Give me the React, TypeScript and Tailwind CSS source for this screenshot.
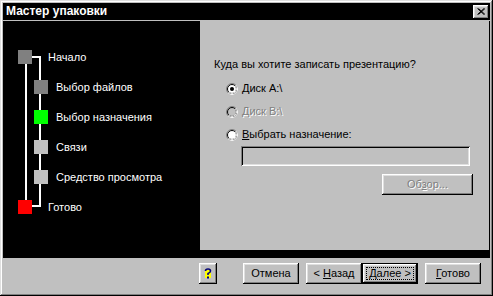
import React from 'react';

const bevel =
  'shadow-[inset_-1px_-1px_#000,inset_1px_1px_#fff,inset_-2px_-2px_#808080,inset_2px_2px_#dfdfdf]';

function Radio({ checked = false, disabled = false }: { checked?: boolean; disabled?: boolean }) {
  return (
    <svg width="12" height="12" viewBox="0 0 12 12" className="shrink-0">
      <circle cx="6" cy="6" r="5" fill={disabled ? '#c0c0c0' : '#fff'} />
      <circle cx="6" cy="6" r="5.5" fill="none" stroke="#808080" />
      <path d="M9.89 2.11 A5.5 5.5 0 0 1 2.11 9.89" fill="none" stroke="#fff" />
      <circle cx="6" cy="6" r="4.5" fill="none" stroke="#000" />
      <path d="M9.18 2.82 A4.5 4.5 0 0 1 2.82 9.18" fill="none" stroke="#dfdfdf" />
      {checked && <circle cx="6" cy="6" r="2" fill="#000" />}
    </svg>
  );
}

function Button({
  children,
  width,
  isDefault = false,
}: {
  children: React.ReactNode;
  width: string;
  isDefault?: boolean;
}) {
  if (isDefault) {
    return (
      <div className={`${width} h-[21px] border border-black bg-[#c0c0c0]`}>
        <div className="h-full w-full shadow-[inset_-1px_-1px_#000,inset_1px_1px_#fff,inset_-2px_-2px_#808080,inset_2px_2px_#dfdfdf] p-[3px]">
          <div className="h-full w-full border border-dotted border-black flex items-center justify-center">
            {children}
          </div>
        </div>
      </div>
    );
  }
  return (
    <div className={`${width} h-[21px] bg-[#c0c0c0] ${bevel} flex items-center justify-center`}>
      {children}
    </div>
  );
}

const steps = [
  { label: 'Начало', color: 'bg-[#808080]', sub: false },
  { label: 'Выбор файлов', color: 'bg-[#808080]', sub: true },
  { label: 'Выбор назначения', color: 'bg-[#00ff00]', sub: true },
  { label: 'Связи', color: 'bg-[#c0c0c0]', sub: true },
  { label: 'Средство просмотра', color: 'bg-[#c0c0c0]', sub: true },
  { label: 'Готово', color: 'bg-[#ff0000]', sub: false },
];

export default function App() {
  return (
    <div className="w-[493px] h-[296px] bg-[#c0c0c0] p-[3px] shadow-[inset_-1px_-1px_#000,inset_1px_1px_#dfdfdf,inset_-2px_-2px_#808080,inset_2px_2px_#fff] font-['Liberation_Sans',Arial,sans-serif] text-[11px] leading-[13px] text-black flex flex-col">
      {/* title bar */}
      <div className="h-[17px] bg-black flex items-center pl-[3px] pr-[1px]">
        <span className="text-white font-bold text-[12px] flex-1">Мастер упаковки</span>
        <div className={`w-[16px] h-[14px] bg-[#c0c0c0] ${bevel} flex items-center justify-center`}>
          <svg width="8" height="7" viewBox="0 0 8 7">
            <path d="M0.5 0.5 L7 6.5 M1.5 0.5 L8 6.5 M7 0.5 L0.5 6.5 M8 0.5 L1.5 6.5" stroke="#000" strokeWidth="1" />
          </svg>
        </div>
      </div>

      {/* body */}
      <div className="mt-[1px] h-[237px] bg-black flex">
        <div className="w-[197px] relative pt-[21px]">
          <svg className="absolute left-0 top-0" width="60" height="200">
            <rect x="22" y="43" width="2" height="137" fill="#fff" />
            <rect x="36" y="35" width="2" height="151" fill="#fff" />
            <rect x="29" y="35" width="9" height="2" fill="#fff" />
            <rect x="29" y="184" width="9" height="2" fill="#fff" />
          </svg>
          {steps.map((s) => (
            <div key={s.label} className={`relative h-[30px] flex items-center ${s.sub ? 'pl-[31px]' : 'pl-[15px]'}`}>
              <div className={`w-[14px] h-[14px] ${s.color}`} />
              <span className={`text-white ${s.sub ? 'ml-[8px]' : 'ml-[16px]'}`}>{s.label}</span>
            </div>
          ))}
        </div>

        <div className="w-[289px] h-[229px] bg-[#c0c0c0] pl-[14px] pt-[37px]">
          <div>Куда вы хотите записать презентацию?</div>
          <div className="ml-[12px] mt-[10px] flex flex-col gap-[8px]">
            <div className="flex items-center gap-[4px] h-[15px]">
              <Radio checked />
              <span>Диск A:\</span>
            </div>
            <div className="flex items-center gap-[4px] h-[15px]">
              <Radio disabled />
              <span className="text-[#808080] [text-shadow:1px_1px_0_#fff]">
                <u>Д</u>иск B:\
              </span>
            </div>
            <div className="flex items-center gap-[4px] h-[15px]">
              <Radio />
              <span>
                <u>В</u>ыбрать назначение:
              </span>
            </div>
          </div>
          <div className="ml-[27px] mt-[4px] w-[229px] h-[20px] bg-[#c0c0c0] shadow-[inset_1px_1px_#808080,inset_-1px_-1px_#fff,inset_2px_2px_#000,inset_-2px_-2px_#dfdfdf]" />
          <div className="ml-[168px] mt-[8px]">
            <Button width="w-[91px]">
              <span className="text-[#808080] [text-shadow:1px_1px_0_#fff]">
                Об<u>з</u>ор...
              </span>
            </Button>
          </div>
        </div>
      </div>

      {/* footer */}
      <div className="flex items-start pt-[5px] pl-[196px]">
        <div className={`w-[18px] h-[21px] bg-[#c0c0c0] ${bevel} flex items-center justify-center`}>
          <svg width="8" height="11" viewBox="0 0 8 11">
            <rect x="1" y="1" width="6" height="9" fill="#ffff00" />
            <path d="M1.5 3 Q1.5 1 4 1 Q6.5 1 6.5 3 Q6.5 4.5 4 5.5 L4 7" fill="none" stroke="#000080" strokeWidth="1.6" />
            <rect x="3" y="8.5" width="2" height="2" fill="#000080" />
          </svg>
        </div>
        <div className="ml-[26px]">
          <Button width="w-[56px]">Отмена</Button>
        </div>
        <div className="ml-[7px]">
          <Button width="w-[56px]">
            <span>
              &lt; <u>Н</u>азад
            </span>
          </Button>
        </div>
        <Button width="w-[56px]" isDefault>
          <span>
            <u>Д</u>алее &gt;
          </span>
        </Button>
        <div className="ml-[7px]">
          <Button width="w-[56px]">
            <span>
              <u>Г</u>отово
            </span>
          </Button>
        </div>
      </div>
    </div>
  );
}
